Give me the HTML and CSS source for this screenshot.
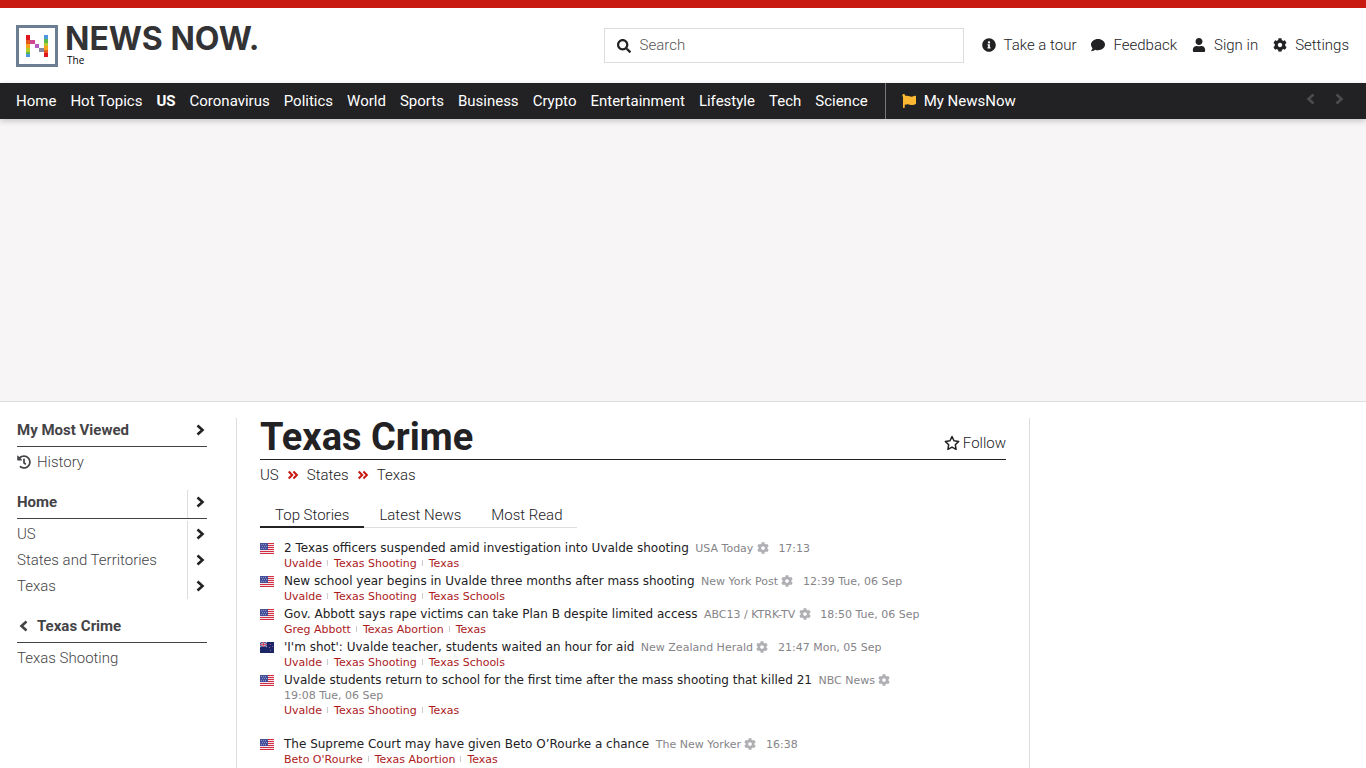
FILE: index.html
```
<!DOCTYPE html>
<html lang="en">
<head>
    <meta charset="utf-8">
    <title>Texas Crime News | NewsNow</title>
    <meta name="viewport" content="width=device-width, initial-scale=1.0">
    <link rel="stylesheet" href="styles.css">
</head>
<body>
    <!-- icons -->
    <svg class="sprite" aria-hidden="true">
        <symbol id="i-search" viewBox="0 0 512 512"><path d="M505 442.700L405.300 343c-4.500-4.500-10.600-7-17-7H372c27.600-35.300 44-79.700 44-128C416 93.100 322.900 0 208 0S0 93.100 0 208s93.100 208 208 208c48.300 0 92.700-16.400 128-44v16.300c0 6.400 2.500 12.500 7 17l99.700 99.700c9.400 9.400 24.600 9.400 33.900 0l28.300-28.300c9.400-9.400 9.400-24.600.1-34zM208 336c-70.700 0-128-57.200-128-128 0-70.700 57.200-128 128-128 70.700 0 128 57.200 128 128 0 70.700-57.200 128-128 128z"/></symbol>
        <symbol id="i-info" viewBox="0 0 512 512"><path d="M256 8C119 8 8 119.100 8 256c0 137 111 248 248 248s248-111 248-248C504 119.100 393 8 256 8zm0 110c23.200 0 42 18.800 42 42s-18.800 42-42 42-42-18.800-42-42 18.800-42 42-42zm56 254c0 6.600-5.400 12-12 12h-88c-6.600 0-12-5.400-12-12v-24c0-6.600 5.400-12 12-12h12v-64h-12c-6.600 0-12-5.400-12-12v-24c0-6.600 5.400-12 12-12h64c6.600 0 12 5.400 12 12v100h12c6.600 0 12 5.400 12 12z"/></symbol>
        <symbol id="i-comment" viewBox="0 0 512 512"><path d="M256 32C114.600 32 0 125.100 0 240c0 49.600 21.400 95 57 130.700C44.500 421.100 2.700 466 2.200 466.500c-2.200 2.300-2.800 5.700-1.500 8.700S4.800 480 8 480c66.300 0 116-31.800 140.600-51.400 32.700 12.300 69 19.400 107.400 19.400 141.400 0 256-93.100 256-208S397.400 32 256 32z"/></symbol>
        <symbol id="i-user" viewBox="0 0 448 512"><path d="M224 256c70.700 0 128-57.300 128-128S294.700 0 224 0 96 57.300 96 128s57.300 128 128 128zm89.600 32h-16.700c-22.200 10.200-46.900 16-72.900 16s-50.600-5.800-72.900-16h-16.700C60.200 288 0 348.200 0 422.400V464c0 26.500 21.500 48 48 48h352c26.500 0 48-21.500 48-48v-41.600c0-74.200-60.200-134.400-134.400-134.400z"/></symbol>
        <symbol id="i-cog" viewBox="0 0 512 512"><path d="M487.400 315.700l-42.600-24.600c4.300-23.200 4.300-47 0-70.200l42.600-24.600c4.900-2.800 7.100-8.600 5.500-14-11.100-35.600-30-67.800-54.700-94.600-3.800-4.100-10-5.100-14.800-2.300L380.800 110c-17.900-15.400-38.500-27.300-60.800-35.100V25.800c0-5.600-3.900-10.500-9.400-11.700-36.700-8.200-74.300-7.800-109.200 0-5.500 1.200-9.400 6.100-9.400 11.700V75c-22.200 7.900-42.800 19.800-60.800 35.100L88.700 85.500c-4.900-2.800-11-1.900-14.800 2.300-24.700 26.700-43.600 58.900-54.700 94.600-1.700 5.400.6 11.200 5.500 14L67.300 221c-4.300 23.200-4.300 47 0 70.200l-42.600 24.600c-4.900 2.800-7.100 8.600-5.500 14 11.100 35.600 30 67.800 54.700 94.600 3.800 4.100 10 5.100 14.800 2.300l42.600-24.600c17.900 15.400 38.500 27.300 60.800 35.100v49.200c0 5.600 3.900 10.500 9.400 11.700 36.700 8.200 74.300 7.800 109.200 0 5.500-1.200 9.400-6.100 9.400-11.700v-49.200c22.200-7.900 42.800-19.800 60.800-35.100l42.600 24.600c4.900 2.800 11 1.900 14.800-2.300 24.700-26.700 43.600-58.900 54.700-94.600 1.500-5.500-.7-11.300-5.600-14.100zM256 336c-44.100 0-80-35.900-80-80s35.900-80 80-80 80 35.900 80 80-35.900 80-80 80z"/></symbol>
        <symbol id="i-flag" viewBox="0 0 512 512"><path d="M349.600 98.800c-54 0-98.200-34.800-166-34.800-25 0-47.300 4.300-68.100 12.100 2.900-8.100 4.200-16.900 3.500-26.100C117 24.100 95.700 2.800 69.800 1.200 38.200-.7 12 24.400 12 56c0 19 9.500 35.800 24 45.900V488c0 13.300 10.700 24 24 24h16c13.300 0 24-10.700 24-24v-94.400c28.300-12.200 63.600-22.100 114.400-22.100 54 0 98.200 34.800 166 34.800 48.400 0 87.200-16.400 122.500-40.900 8.700-6 13.800-15.900 13.800-26.500V95.900c0-23.400-24.200-38.800-45.400-29-34.300 15.900-76.300 31.900-115.700 31.900z"/></symbol>
        <symbol id="i-right" viewBox="0 0 14 14"><path d="M4.500 2.500L9.500 7l-5 4.500" fill="none" stroke="currentColor" stroke-width="2.600"/></symbol>
        <symbol id="i-left" viewBox="0 0 14 14"><path d="M9.500 2.500L4.500 7l5 4.500" fill="none" stroke="currentColor" stroke-width="2.600"/></symbol>
        <symbol id="i-double" viewBox="0 0 14 14"><path d="M2 3l4 4-4 4M7.500 3l4 4-4 4" fill="none" stroke="currentColor" stroke-width="2.400"/></symbol>
        <symbol id="i-history" viewBox="0 0 512 512"><path d="M504 255.500c.3 136.600-111.200 248.400-247.800 248.500-59 0-113.200-20.500-155.800-54.900-11.100-8.900-11.900-25.500-1.800-35.600l11.300-11.300c8.600-8.600 22.400-9.600 31.900-2C173.100 425.100 212.800 440 256 440c101.700 0 184-82.300 184-184 0-101.700-82.300-184-184-184-48.800 0-93.100 19-126.100 49.900l50.800 50.800c10.100 10.100 2.900 27.300-11.300 27.300H24c-8.800 0-16-7.200-16-16V38.600c0-14.300 17.200-21.400 27.300-11.300l49.400 49.400C129.200 34.100 189.600 8 256 8c136.800 0 247.700 110.800 248 247.500zM323.100 350.700l9.800-12.600c8.100-10.500 6.300-25.500-4.200-33.700L288 272.700V152c0-13.300-10.700-24-24-24h-16c-13.300 0-24 10.700-24 24v152.300l65.400 50.900c10.500 8.100 25.500 6.300 33.700-4.500z"/></symbol>
        <symbol id="i-star" viewBox="0 0 16 16"><path d="M8 1.500l2 4.300 4.700.6-3.400 3.300.8 4.700L8 12.100l-4.100 2.300.8-4.700L1.300 6.400 6 5.800z" fill="none" stroke="currentColor" stroke-width="1.500" stroke-linejoin="round"/></symbol>
        <symbol id="f-us" viewBox="0 0 14 11">
            <path fill="#f3e4ea" d="M0 0h14v11H0z"/>
            <path fill="#d22f42" d="M0 0h14v1H0zM0 2h14v1H0zM0 4h14v1H0zM0 6h14v1H0zM0 8h14v1H0zM0 10h14v1H0z"/>
            <path fill="#46509a" d="M0 0h8v7H0z"/>
            <path fill="#8d94c4" d="M1 1h1v1H1zM3 1h1v1H3zM5 1h1v1H5zM2 3h1v1H2zM4 3h1v1H4zM6 3h1v1H6zM1 5h1v1H1zM3 5h1v1H3zM5 5h1v1H5z"/>
        </symbol>
        <symbol id="f-nz" viewBox="0 0 14 11">
            <path fill="#1b2668" d="M0 0h14v11H0z"/>
            <path stroke="#b9bcdc" d="M0 0l7 5M7 0L0 5"/>
            <path stroke="#e8e4f0" stroke-width="1.600" d="M3.500 0v5M0 2.500h7"/>
            <path stroke="#d8304a" stroke-width=".8" d="M3.500 0v5M0 2.500h7"/>
            <path fill="#b0567e" d="M10 2h1v1h-1zM12 4h1v1h-1zM9 5h1v1H9zM10 8h1v1h-1z"/>
        </symbol>
    </svg>

    <header class="header">
        <a class="logo" href="#">
            <svg class="logo-mark" viewBox="0 0 42 42">
                <path fill="#fff" stroke="#6c7f92" stroke-width="3" d="M1.500 1.500h39v39h-39z"/>
                <path fill="#e0161f" d="M10 10h4v5h-4z"/>
                <path fill="#e8591f" d="M10 15h4v4h-4z"/>
                <path fill="#f5a21d" d="M10 19h4v4h-4z"/>
                <path fill="#b8cc27" d="M10 23h4v4h-4z"/>
                <path fill="#5cb84d" d="M10 27h4v2h-4z"/>
                <path fill="#4d97e0" d="M10 29h4v3h-4z"/>
                <path fill="#d04a92" d="M14 15h5v4h-5z"/>
                <path fill="#b35cc4" d="M19 19h4v4h-4z"/>
                <path fill="#8389a5" d="M23 23h5v4h-5z"/>
                <path fill="#4d97e0" d="M28 10h4v4h-4z"/>
                <path fill="#5cb84d" d="M28 14h4v4h-4z"/>
                <path fill="#b8cc27" d="M28 18h4v3h-4z"/>
                <path fill="#f5a21d" d="M28 21h4v4h-4z"/>
                <path fill="#e8591f" d="M28 25h4v3h-4z"/>
                <path fill="#e0161f" d="M28 28h4v4h-4z"/>
            </svg>
            <span class="logo-text">
                <span class="logo-name">NEWS NOW.</span>
                <span class="logo-sub">The</span>
            </span>
        </a>
        <form class="search">
            <svg class="icon"><use href="#i-search"/></svg>
            <input type="text" placeholder="Search" aria-label="Search">
        </form>
        <div class="tools">
            <a href="#"><svg class="icon"><use href="#i-info"/></svg>Take a tour</a>
            <a href="#"><svg class="icon"><use href="#i-comment"/></svg>Feedback</a>
            <a href="#"><svg class="icon"><use href="#i-user"/></svg>Sign in</a>
            <a href="#"><svg class="icon"><use href="#i-cog"/></svg>Settings</a>
        </div>
    </header>

    <nav class="nav">
        <div class="nav-links">
            <a href="#">Home</a>
            <a href="#">Hot Topics</a>
            <a class="current" href="#">US</a>
            <a href="#">Coronavirus</a>
            <a href="#">Politics</a>
            <a href="#">World</a>
            <a href="#">Sports</a>
            <a href="#">Business</a>
            <a href="#">Crypto</a>
            <a href="#">Entertainment</a>
            <a href="#">Lifestyle</a>
            <a href="#">Tech</a>
            <a href="#">Science</a>
        </div>
        <a class="my-news" href="#"><svg class="icon"><use href="#i-flag"/></svg>My NewsNow</a>
        <div class="nav-arrows">
            <button type="button" aria-label="Scroll left"><svg class="icon"><use href="#i-left"/></svg></button>
            <button type="button" aria-label="Scroll right"><svg class="icon"><use href="#i-right"/></svg></button>
        </div>
    </nav>

    <div class="billboard"></div>

    <div class="page">
        <aside class="sidebar">
            <section class="side-block">
                <h2><a href="#">My Most Viewed</a><button type="button" aria-label="Open My Most Viewed"><svg class="icon"><use href="#i-right"/></svg></button></h2>
                <ul>
                    <li><a href="#"><svg class="icon"><use href="#i-history"/></svg>History</a></li>
                </ul>
            </section>
            <section class="side-block split">
                <h2><a href="#">Home</a><button type="button" aria-label="Open Home"><svg class="icon"><use href="#i-right"/></svg></button></h2>
                <ul>
                    <li><a href="#">US</a><button type="button" aria-label="Open US"><svg class="icon"><use href="#i-right"/></svg></button></li>
                    <li><a href="#">States and Territories</a><button type="button" aria-label="Open States and Territories"><svg class="icon"><use href="#i-right"/></svg></button></li>
                    <li><a href="#">Texas</a><button type="button" aria-label="Open Texas"><svg class="icon"><use href="#i-right"/></svg></button></li>
                </ul>
            </section>
            <section class="side-block">
                <h2><a href="#"><svg class="icon"><use href="#i-left"/></svg>Texas Crime</a></h2>
                <ul>
                    <li><a href="#">Texas Shooting</a></li>
                </ul>
            </section>
        </aside>

        <main class="main">
            <div class="title">
                <h1>Texas Crime</h1>
                <button type="button" class="follow"><svg class="icon"><use href="#i-star"/></svg>Follow</button>
            </div>
            <div class="crumbs">
                <a href="#">US</a>
                <svg class="icon"><use href="#i-double"/></svg>
                <a href="#">States</a>
                <svg class="icon"><use href="#i-double"/></svg>
                <a href="#">Texas</a>
            </div>
            <div class="tabs">
                <a class="active" href="#">Top Stories</a>
                <a href="#">Latest News</a>
                <a href="#">Most Read</a>
            </div>

            <div class="stories">
                <article class="story">
                    <svg class="flag"><use href="#f-us"/></svg>
                    <div>
                        <a class="headline" href="#">2 Texas officers suspended amid investigation into Uvalde shooting</a>
                        <span class="source">USA Today <svg class="icon"><use href="#i-cog"/></svg></span> <span class="time">17:13</span>
                        <div class="tags"><a href="#">Uvalde</a><a href="#">Texas Shooting</a><a href="#">Texas</a></div>
                    </div>
                </article>
                <article class="story">
                    <svg class="flag"><use href="#f-us"/></svg>
                    <div>
                        <a class="headline" href="#">New school year begins in Uvalde three months after mass shooting</a>
                        <span class="source">New York Post <svg class="icon"><use href="#i-cog"/></svg></span> <span class="time">12:39 Tue, 06 Sep</span>
                        <div class="tags"><a href="#">Uvalde</a><a href="#">Texas Shooting</a><a href="#">Texas Schools</a></div>
                    </div>
                </article>
                <article class="story">
                    <svg class="flag"><use href="#f-us"/></svg>
                    <div>
                        <a class="headline" href="#">Gov. Abbott says rape victims can take Plan B despite limited access</a>
                        <span class="source">ABC13 / KTRK-TV <svg class="icon"><use href="#i-cog"/></svg></span> <span class="time">18:50 Tue, 06 Sep</span>
                        <div class="tags"><a href="#">Greg Abbott</a><a href="#">Texas Abortion</a><a href="#">Texas</a></div>
                    </div>
                </article>
                <article class="story">
                    <svg class="flag"><use href="#f-nz"/></svg>
                    <div>
                        <a class="headline" href="#">'I'm shot': Uvalde teacher, students waited an hour for aid</a>
                        <span class="source">New Zealand Herald <svg class="icon"><use href="#i-cog"/></svg></span> <span class="time">21:47 Mon, 05 Sep</span>
                        <div class="tags"><a href="#">Uvalde</a><a href="#">Texas Shooting</a><a href="#">Texas Schools</a></div>
                    </div>
                </article>
                <article class="story">
                    <svg class="flag"><use href="#f-us"/></svg>
                    <div>
                        <a class="headline" href="#">Uvalde students return to school for the first time after the mass shooting that killed 21</a>
                        <span class="source">NBC News <svg class="icon"><use href="#i-cog"/></svg></span> <span class="time">19:08 Tue, 06 Sep</span>
                        <div class="tags"><a href="#">Uvalde</a><a href="#">Texas Shooting</a><a href="#">Texas</a></div>
                    </div>
                </article>
            </div>
            <div class="stories">
                <article class="story">
                    <svg class="flag"><use href="#f-us"/></svg>
                    <div>
                        <a class="headline" href="#">The Supreme Court may have given Beto O’Rourke a chance</a>
                        <span class="source">The New Yorker <svg class="icon"><use href="#i-cog"/></svg></span> <span class="time">16:38</span>
                        <div class="tags"><a href="#">Beto O'Rourke</a><a href="#">Texas Abortion</a><a href="#">Texas</a></div>
                    </div>
                </article>
            </div>
        </main>

        <aside class="rail"></aside>
    </div>
</body>
</html>
```
FILE: styles.css
```
* {
    box-sizing: border-box;
}
body {
    margin: 0;
    border-top: 8px solid #c91a12;
    background-color: #ffffff;
    color: #222124;
    font-family: Roboto, "Liberation Sans", sans-serif;
    font-size: 15px;
    font-weight: 300;
    line-height: 20px;
}
a {
    color: inherit;
    text-decoration: none;
}
a:hover {text-decoration: underline}
button {
    display: flex;
    align-items: center;
    padding: 0;
    border: none;
    background: none;
    color: inherit;
    font: inherit;
    cursor: pointer;
}
ul {
    margin: 0;
    padding: 0;
    list-style: none;
}
.sprite {
    display: none;
}
.icon {
    flex: none;
    width: 14px;
    height: 14px;
    fill: currentColor;
}

/* header */
.header {
    display: flex;
    align-items: center;
    height: 75px;
    padding: 0 17px 0 16px;
}
.logo {
    display: flex;
    gap: 7px;
    margin-right: auto;
}
.logo-mark {
    width: 42px;
    height: 42px;
}
.logo-text {
    display: flex;
    flex-direction: column;
}
.logo-name {
    color: #333335;
    font-family: Inter, sans-serif;
    font-size: 32px;
    font-weight: 700;
    line-height: 28px;
}
.logo-sub {
    padding-left: 2px;
    color: #000000;
    font-family: "Open Sans", sans-serif;
    font-size: 10px;
    font-weight: 400;
    line-height: 14px;
}
.search {
    display: flex;
    align-items: center;
    gap: 9px;
    width: 360px;
    height: 35px;
    padding: 0 12px;
    border: 1px solid #dddddd;
}
.search input {
    flex: 1;
    min-width: 0;
    padding: 0 0 2px;
    border: none;
    outline: none;
    background: none;
    font: inherit;
}
.search input::placeholder {
    color: #555555;
}
.tools {
    display: flex;
    gap: 15px;
    margin-left: 18px;
    padding-bottom: 2px;
}
.tools a {
    display: flex;
    align-items: center;
    gap: 8px;
}

/* nav */
.nav {
    position: relative;
    display: flex;
    height: 36px;
    padding: 0 16px;
    background-color: #222124;
    color: #ffffff;
    font-weight: 400;
    line-height: 36px;
    box-shadow: 0 2px 6px rgba(0, 0, 0, 0.2);
}
.nav-links {
    display: flex;
    gap: 14px;
    padding-right: 17px;
}
.current {
    font-weight: 700;
}
.my-news {
    display: flex;
    align-items: center;
    gap: 8px;
    padding-left: 16px;
    border-left: 1px solid #77767a;
}
.my-news .icon {
    color: #fdb833;
}
.nav-arrows {
    display: flex;
    gap: 14px;
    margin-left: auto;
    padding: 0 4px 4px 0;
    color: #4c4b4e;
}

.billboard {
    height: 283px;
    background-color: #f7f5f6;
    border-bottom: 1px solid #dddddd;
}

.page {
    display: flex;
    padding-top: 16px;
}

/* sidebar */
.sidebar {
    width: 236px;
    padding: 0 29px 0 17px;
    color: #444346;
}
.side-block {
    margin-bottom: 15px;
}
.side-block h2 {
    display: flex;
    justify-content: space-between;
    height: 29px;
    margin: 0 0 2px;
    border-bottom: 1px solid #444346;
    font-size: 15px;
    font-weight: 700;
}
.side-block h2 a, .side-block h2 button {
    padding-bottom: 4px;
}
.side-block h2 a, .side-block li a {
    display: flex;
    align-items: center;
    gap: 6px;
}
.side-block li {
    display: flex;
    justify-content: space-between;
    height: 26px;
}
.side-block button {
    width: 20px;
    justify-content: flex-end;
    color: #222124;
}
.split button {
    border-left: 1px solid #dddddd;
}

/* main */
.main {
    flex: 1;
    min-width: 0;
    padding: 0 23px;
    min-height: 360px;
    border-left: 1px solid #dddddd;
    border-right: 1px solid #dddddd;
}
.rail {
    width: 336px;
}
.title {
    display: flex;
    justify-content: space-between;
    align-items: flex-end;
    height: 42px;
    border-bottom: 1px solid #222124;
}
.title h1 {
    margin: 0;
    font-size: 38px;
    font-weight: 700;
    line-height: 44px;
}
.follow {
    gap: 3px;
    padding-bottom: 6px;
}
.follow .icon {
    width: 16px;
    height: 16px;
}
.crumbs {
    display: flex;
    align-items: center;
    gap: 8px;
    height: 30px;
}
.crumbs .icon {
    width: 12px;
    color: #c91a12;
}
.tabs {
    display: flex;
    margin: 12px 0 13px;
}
.tabs a {
    padding: 3px 15px 2px;
    border-bottom: 1px solid #dddddd;
}
.tabs .active {
    padding-bottom: 1px;
    border-bottom: 2px solid #222124;
}

/* stories */
.stories {
    margin-bottom: 19px;
    padding-right: 16px;
    font-family: Verdana, "DejaVu Sans", sans-serif;
    font-size: 11px;
    font-weight: 400;
    line-height: 15px;
}
.story {
    display: flex;
    gap: 10px;
    margin-bottom: 3px;
}
.flag {
    flex: none;
    width: 14px;
    height: 11px;
    margin-top: 2px;
}
.headline {
    margin-right: 3px;
    font-size: 12px;
}
.source, .time {
    color: #858488;
    white-space: nowrap;
}
.source {
    margin-right: 6px;
}
.source .icon {
    width: 12px;
    height: 12px;
    color: #b0afb3;
    vertical-align: -2px;
}
.tags {
    display: flex;
    color: #ac1a1c;
}
.tags a + a::before {
    content: "";
    display: inline-block;
    width: 1px;
    height: 6px;
    margin: 0 6px 1px 5px;
    background-color: #cccccc;
}
```
